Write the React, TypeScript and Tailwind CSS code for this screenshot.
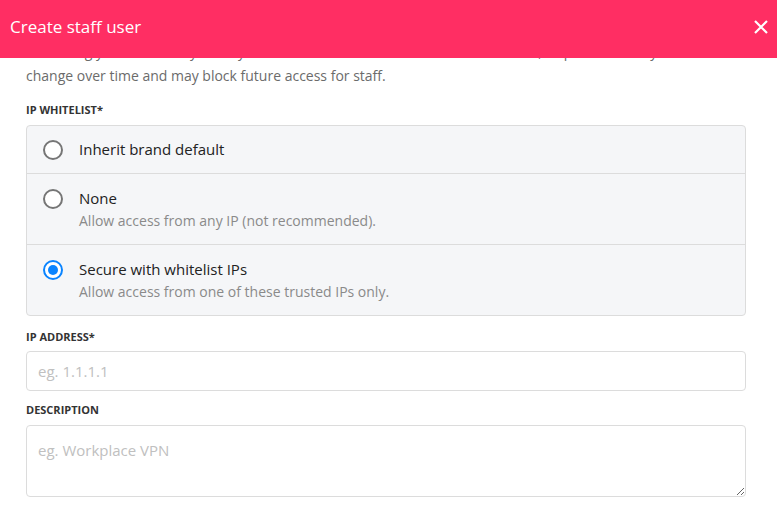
import React from "react";

const options = [
  { label: "Inherit brand default", sub: "", checked: false },
  { label: "None", sub: "Allow access from any IP (not recommended).", checked: false },
  { label: "Secure with whitelist IPs", sub: "Allow access from one of these trusted IPs only.", checked: true },
];

function Radio({ checked }: { checked: boolean }) {
  if (checked) {
    return (
      <span className="flex h-5 w-5 shrink-0 items-center justify-center rounded-full border-2 border-[#0a84ff] bg-white">
        <span className="h-[10px] w-[10px] rounded-full bg-[#0a84ff]" />
      </span>
    );
  }
  return <span className="block h-5 w-5 shrink-0 rounded-full border-2 border-[#767676] bg-white" />;
}

export default function App() {
  return (
    <div className="flex h-[510px] w-[777px] flex-col overflow-hidden bg-white font-['Open_Sans','Liberation_Sans',sans-serif] text-[#333]">
      {/* header */}
      <div className="relative z-10 flex h-[58px] shrink-0 items-center justify-between bg-[#ff2e63] pb-[4px] pl-[10px] pr-[9px]">
        <h1 className="text-[17px] text-white">Create staff user</h1>
        <svg width="14" height="14" viewBox="0 0 14 14">
          <path d="M1 1L13 13M13 1L1 13" stroke="white" strokeWidth="2.2" />
        </svg>
      </div>

      {/* scrolled body */}
      <div className="flex-1 overflow-hidden px-[26px] pr-[31px]">
        <p className="-mt-[18px] text-[14px] leading-[24px] text-[#6b6b6b]">
          We strongly recommend you only allow staff to access from a secured network, as public IPs may
          <br />
          change over time and may block future access for staff.
        </p>

        <div className="mt-[14px] text-[11px] font-bold uppercase leading-[16px] text-[#333]">IP Whitelist*</div>
        <div className="mt-[7px] overflow-hidden rounded border border-[#dcdcdc] bg-[#f5f6f8]">
          {options.map((o, i) => (
            <div
              key={o.label}
              className={`flex gap-[16px] pl-[16px] ${i > 0 ? "border-t border-[#dcdcdc]" : ""} ${o.sub ? "pb-[13px] pt-[14px]" : "py-[13px]"}`}
            >
              <div className="pt-[1px]">
                <Radio checked={o.checked} />
              </div>
              <div>
                <div className="text-[15px] leading-[21px] text-[#222]">{o.label}</div>
                {o.sub && <div className="mt-[2px] text-[14px] leading-[20px] text-[#8a8a8a]">{o.sub}</div>}
              </div>
            </div>
          ))}
        </div>

        <div className="mt-[13px] text-[11px] font-bold uppercase leading-[16px] text-[#333]">IP Address*</div>
        <input
          placeholder="eg. 1.1.1.1"
          className="mt-[6px] block h-[40px] w-full rounded border border-[#dcdcdc] px-[11px] text-[15px] outline-none placeholder:text-[#c0c0c0]"
        />

        <div className="mt-[11px] text-[11px] font-bold uppercase leading-[16px] text-[#333]">Description</div>
        <textarea
          placeholder="eg. Workplace VPN"
          className="mt-[7px] block h-[72px] w-full rounded border border-[#dcdcdc] px-[11px] py-[13px] text-[15px] outline-none placeholder:text-[#c0c0c0]"
        />
      </div>
    </div>
  );
}
